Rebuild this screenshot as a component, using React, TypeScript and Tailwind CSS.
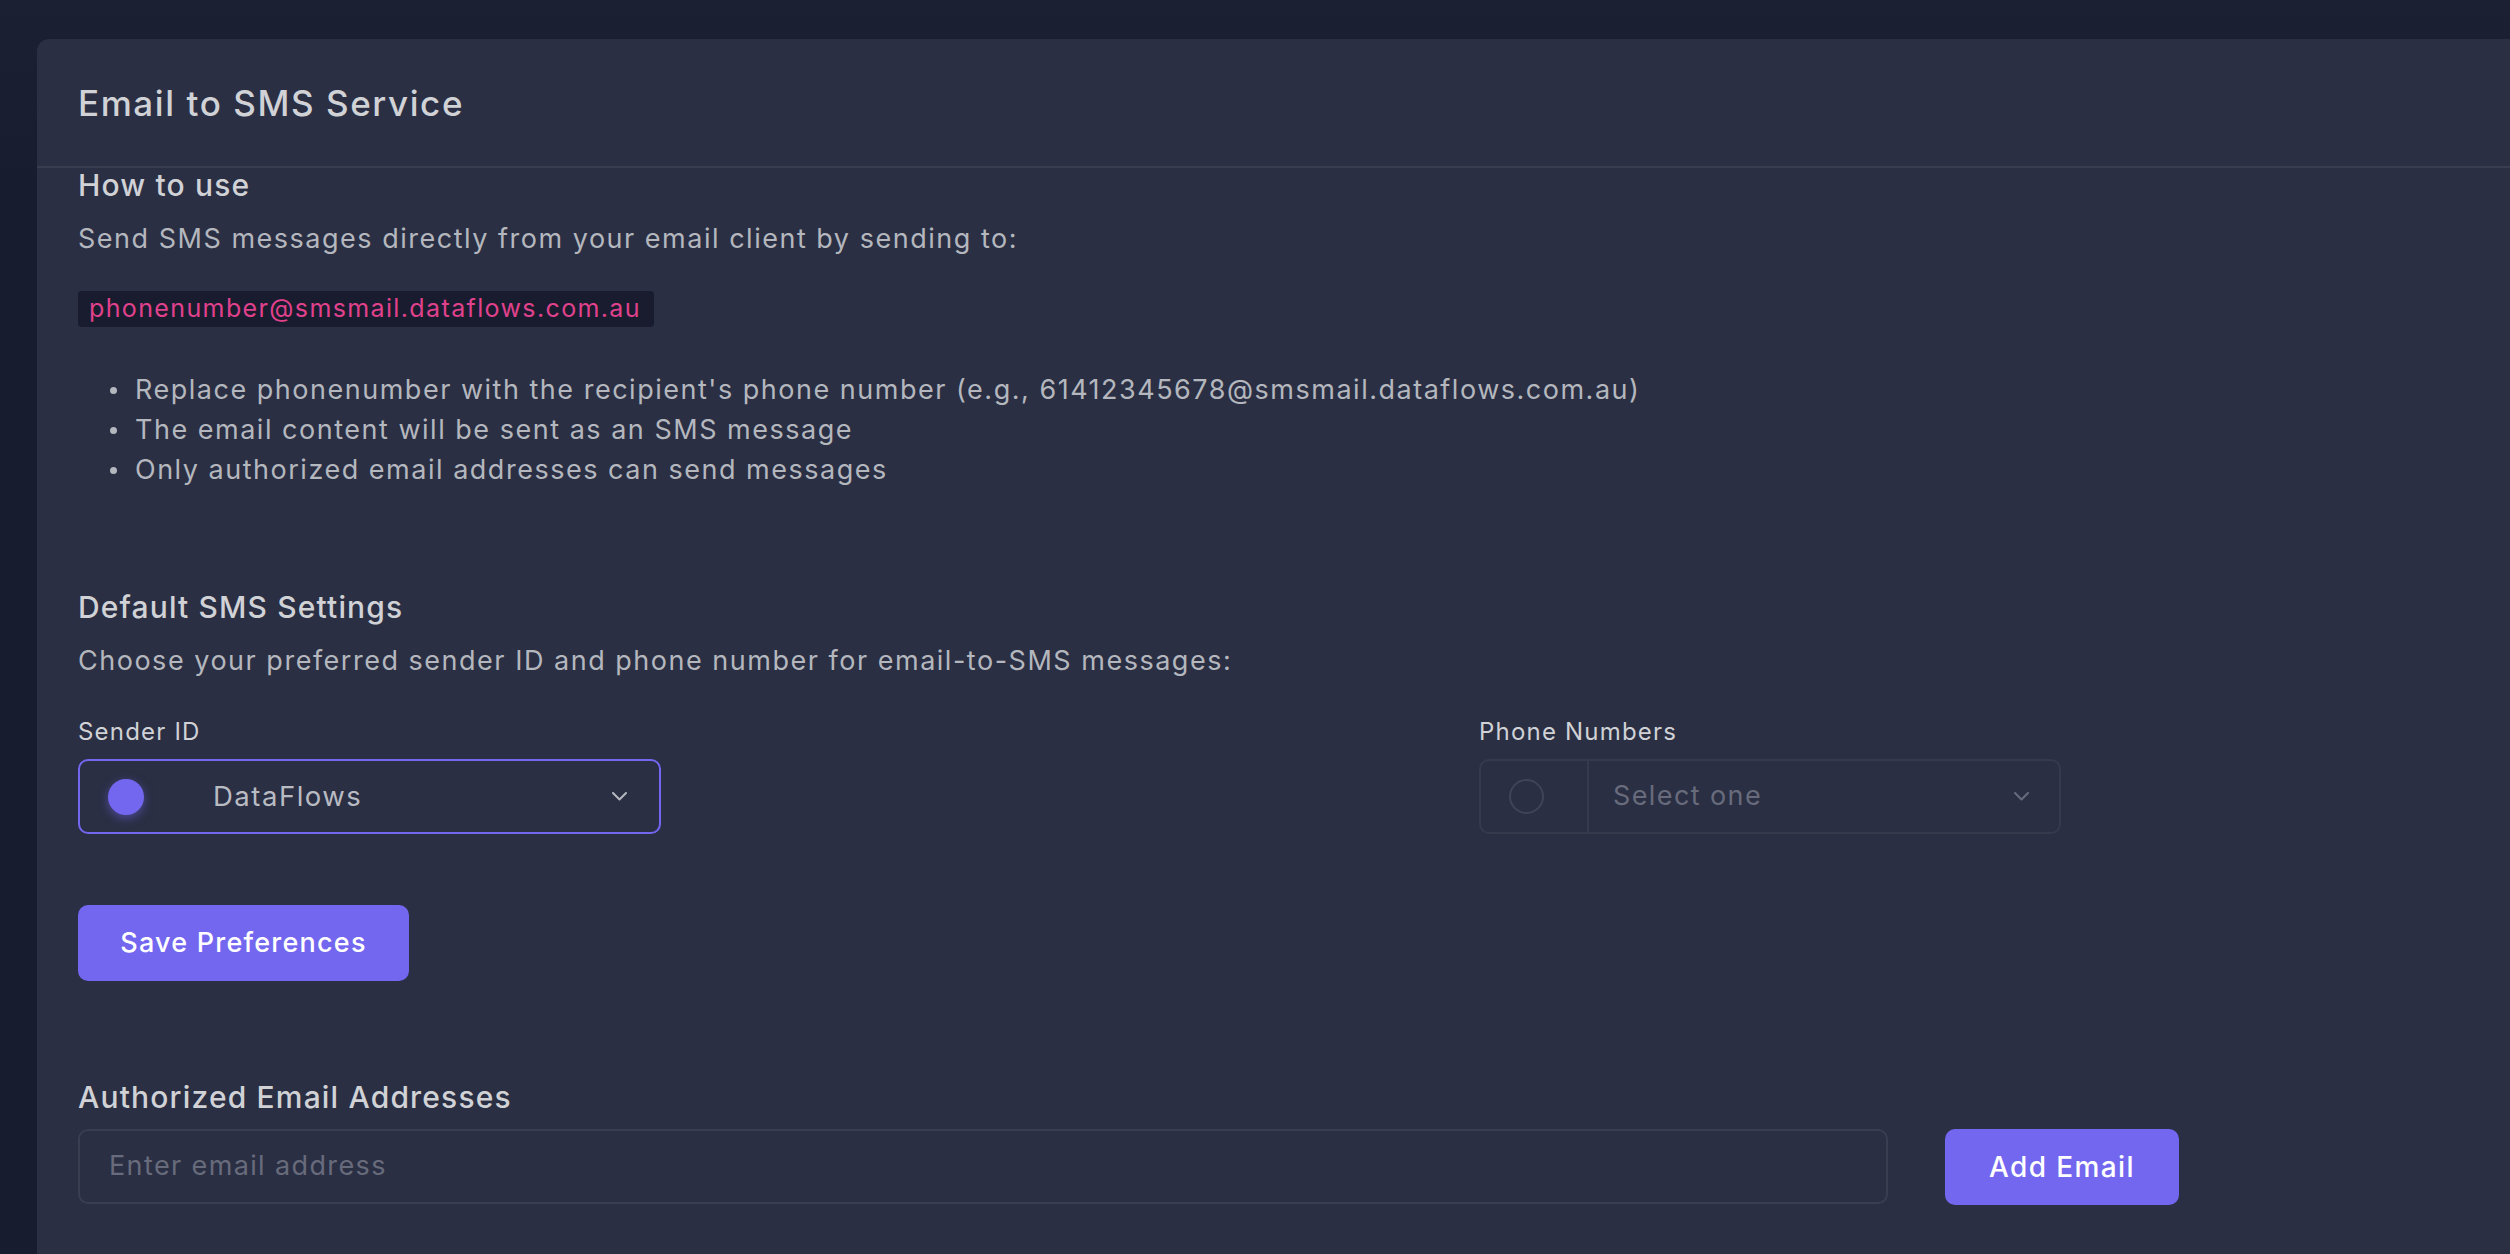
import React from "react";

const font = { fontFamily: "Inter, 'Noto Sans', sans-serif" };

function Chevron({ color }: { color: string }) {
  return (
    <svg width="15" height="9" viewBox="0 0 15 9" fill="none">
      <polyline points="1,1 7.5,7.5 14,1" stroke={color} strokeWidth="2" strokeLinecap="round" strokeLinejoin="round" />
    </svg>
  );
}

export default function App() {
  return (
    <div
      className="w-[2510px] h-[1254px] overflow-hidden bg-[linear-gradient(180deg,#1b2033_0px,#1a1f32_40px,#171c2f_200px)] pt-[39px] pl-[37px]"
      style={font}
    >
      <div className="w-[3000px] h-[1400px] rounded-[12px] bg-[#2a2f44]">
        {/* header */}
        <div className="h-[129px] flex items-center px-[41px] border-b-2 border-[#383d50]">
          <h4 className="text-[35px] leading-[40px] font-medium text-[#d0d2d6] tracking-[0.045em]">
            Email to SMS Service
          </h4>
        </div>

        {/* body */}
        <div className="pl-[41px]">
          <h6 className="text-[30px] leading-[34px] font-medium text-[#d0d2d6] tracking-[0.039em]">How to use</h6>
          <p className="mt-[18px] text-[27px] leading-[38px] text-[#b4b7bd] tracking-[0.056em]">
            Send SMS messages directly from your email client by sending to:
          </p>
          <div className="mt-[33px]">
            <code
              className="inline-flex items-center h-[36px] rounded-[4px] bg-[#181c2e] pl-[11px] pr-[13px] text-[25px] text-[#e0418c] tracking-[0.055em]"
              style={font}
            >
              phonenumber@smsmail.dataflows.com.au
            </code>
          </div>
          <ul className="mt-[43px] text-[27px] leading-[40px] text-[#b4b7bd] tracking-[0.056em]">
            {[
              "Replace phonenumber with the recipient's phone number (e.g., 61412345678@smsmail.dataflows.com.au)",
              "The email content will be sent as an SMS message",
              "Only authorized email addresses can send messages",
            ].map((t) => (
              <li key={t} className="flex items-center">
                <span className="ml-[32px] mr-[18px] w-[7px] h-[7px] rounded-full bg-[#b4b7bd]" />
                <span>{t}</span>
              </li>
            ))}
          </ul>

          <h6 className="mt-[100px] text-[30px] leading-[34px] font-medium text-[#d0d2d6] tracking-[0.038em]">
            Default SMS Settings
          </h6>
          <p className="mt-[18px] text-[27px] leading-[38px] text-[#b4b7bd] tracking-[0.056em]">
            Choose your preferred sender ID and phone number for email-to-SMS messages:
          </p>

          <div className="mt-[37px] flex">
            <div className="w-[1401px]">
              <label className="block text-[24px] leading-[30px] text-[#d0d2d6] tracking-[0.05em]">Sender ID</label>
              <div className="mt-[12px] w-[583px] h-[75px] rounded-[10px] border-2 border-[#7367f0] flex items-center pl-[28px] pr-[32px]">
                <span className="w-[36px] h-[36px] rounded-full bg-[#7367f0] shadow-[0_3px_10px_rgba(115,103,240,0.5)]" />
                <span className="ml-[69px] flex-1 text-[27.5px] text-[#b9bbc2] tracking-[0.055em]">DataFlows</span>
                <Chevron color="#b4b7bd" />
              </div>
            </div>
            <div>
              <label className="block text-[24px] leading-[30px] text-[#d0d2d6] tracking-[0.05em]">Phone Numbers</label>
              <div className="mt-[12px] w-[582px] h-[75px] rounded-[10px] border-2 border-[#353a4d] flex">
                <div className="w-[108px] h-full border-r-2 border-[#353a4d] flex items-center pl-[28px]">
                  <span className="w-[35px] h-[35px] rounded-full border-2 border-[#3f4457]" />
                </div>
                <div className="flex-1 flex items-center pl-[24px] pr-[30px]">
                  <span className="flex-1 text-[27px] text-[#676b7b] tracking-[0.052em]">Select one</span>
                  <Chevron color="#676b7b" />
                </div>
              </div>
            </div>
          </div>

          <button className="mt-[71px] block w-[331px] h-[76px] rounded-[10px] bg-[#7367f0] text-white text-[27px] font-medium tracking-[0.045em]">
            Save Preferences
          </button>

          <h6 className="mt-[99px] text-[30px] leading-[34px] font-medium text-[#d0d2d6] tracking-[0.039em]">
            Authorized Email Addresses
          </h6>
          <div className="mt-[15px] flex items-start">
            <div className="w-[1810px] h-[75px] rounded-[10px] border-2 border-[#393e51] flex items-center pl-[29px]">
              <span className="text-[27px] text-[#676b7b] tracking-[0.051em]">Enter email address</span>
            </div>
            <button className="ml-[57px] w-[234px] h-[76px] rounded-[10px] bg-[#7367f0] text-white text-[28px] font-medium tracking-[0.05em]">
              Add Email
            </button>
          </div>
        </div>
      </div>
    </div>
  );
}
